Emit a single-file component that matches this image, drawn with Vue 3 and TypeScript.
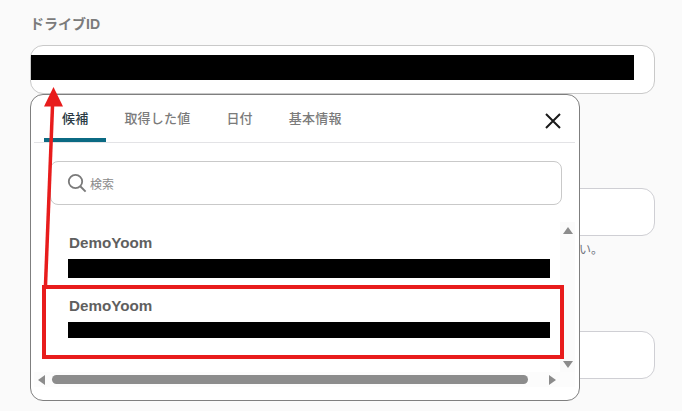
<script setup lang="ts">
const tabs = ['候補', '取得した値', '日付', '基本情報']
const rows = [
  { name: 'DemoYoom', h: 19 },
  { name: 'DemoYoom', h: 16 }
]
</script>

<template>
  <div class="page">
    <div class="label">ドライブID</div>
    <div class="field first"><div class="mask"></div></div>
    <div class="field second"></div>
    <div class="hint">い。</div>
    <div class="field third"></div>

    <div class="popup">
      <div class="tabs">
        <div v-for="(t, i) in tabs" :key="t" class="tab" :class="{ active: i === 0 }">{{ t }}</div>
        <svg class="close" width="18" height="18" viewBox="0 0 18 18">
          <path d="M2 2 16 16M16 2 2 16" stroke="#1a1a1a" stroke-width="2" fill="none" />
        </svg>
      </div>
      <div class="search">
        <svg width="20" height="20" viewBox="0 0 20 20">
          <circle cx="8.5" cy="8.5" r="6.7" stroke="#7a7a7a" stroke-width="1.8" fill="none" />
          <path d="M13.5 13.5 18.6 18.6" stroke="#7a7a7a" stroke-width="1.9" fill="none" />
        </svg>
        <span>検索</span>
      </div>
      <div class="list">
        <div v-for="(r, i) in rows" :key="i" class="row">
          <div class="name">{{ r.name }}</div>
          <div class="bar" :style="{ height: r.h + 'px' }"></div>
        </div>
      </div>
      <div class="vtrack">
        <i class="up"></i>
        <i class="down"></i>
      </div>
      <div class="htrack">
        <i class="left"></i>
        <div class="thumb"></div>
        <i class="right"></i>
      </div>
    </div>

    <div class="highlight"></div>
    <svg class="arrow" width="40" height="200" viewBox="0 0 40 200">
      <path d="M2.5 197 9.5 18" stroke="#e81c1c" stroke-width="3.5" fill="none" />
      <path d="M1 18.5 10.5 -1 20 18.5Z" fill="#e81c1c" />
    </svg>
  </div>
</template>

<style scoped>
.page {
  position: relative;
  width: 682px;
  height: 411px;
  box-sizing: border-box;
  overflow: hidden;
  padding: 16px 27px 0 30px;
  background: #fafafa;
  font-family: "Liberation Sans", "Noto Sans CJK JP", sans-serif;
}
.label {
  height: 29px;
  line-height: 17px;
  font-size: 14px;
  font-weight: 700;
  color: #7b7b7b;
}
.field {
  box-sizing: border-box;
  background: #fff;
  border: 1px solid #cfcfd4;
  border-radius: 13px;
}
.first {
  height: 49px;
  padding-top: 9px;
  border-color: #c9c9c9;
}
.mask {
  width: 603px;
  height: 25px;
  background: #000;
}
.second {
  height: 48px;
  margin-top: 94px;
}
.hint {
  height: 32px;
  padding: 7px 0 0 549px;
  box-sizing: border-box;
  font-size: 12px;
  line-height: 14px;
  color: #6f7480;
}
.third {
  height: 48px;
  margin-top: 63px;
}
.popup {
  position: absolute;
  left: 30px;
  top: 94px;
  box-sizing: border-box;
  width: 550px;
  height: 307px;
  background: #fff;
  border: 1px solid #7f7f7f;
  border-radius: 13px;
  display: flex;
  flex-direction: column;
}
.tabs {
  position: relative;
  box-sizing: border-box;
  display: flex;
  height: 48px;
  margin: 0 4px 0 3px;
  padding-left: 10px;
  flex: none;
  border-bottom: 1px solid #e3e3e6;
}
.tab {
  box-sizing: border-box;
  height: 47px;
  padding: 15px 18px 0;
  font-size: 13px;
  line-height: 18px;
  font-weight: 500;
  letter-spacing: 0.2px;
  color: #7b7b7b;
  white-space: nowrap;
}
.tab.active {
  color: #2a3a44;
  border-bottom: 4px solid #0b6a83;
  border-radius: 3px 3px 0 0;
}
.close {
  position: absolute;
  right: 13px;
  top: 17px;
}
.search {
  flex: none;
  box-sizing: border-box;
  width: 512px;
  height: 44px;
  margin: 18px 0 0 19px;
  padding-left: 16px;
  border: 1px solid #c9c9c9;
  border-radius: 8px;
  display: flex;
  align-items: center;
  gap: 3px;
  font-size: 12px;
  color: #8a8a8a;
}
.list {
  flex: none;
  padding: 28px 0 0 37px;
}
.row {
  height: 63px;
  width: 482px;
}
.name {
  height: 26px;
  padding-left: 1px;
  font-size: 15.2px;
  line-height: 20px;
  font-weight: 700;
  color: #5f5f5f;
}
.bar {
  background: #000;
}
.vtrack {
  position: absolute;
  right: 4px;
  top: 127px;
  bottom: 28px;
  width: 15px;
  background: #fbfbfb;
}
.vtrack i,
.htrack i {
  position: absolute;
  width: 0;
  height: 0;
  border-style: solid;
  border-color: transparent;
}
.vtrack .up {
  left: 3px;
  top: 5px;
  border-width: 0 5px 7px;
  border-bottom-color: #8c8c8c;
}
.vtrack .down {
  left: 3px;
  bottom: 4px;
  border-width: 7px 5px 0;
  border-top-color: #8c8c8c;
}
.htrack {
  position: absolute;
  left: 3px;
  right: 4px;
  bottom: 13px;
  height: 15px;
  background: #fcfcfc;
}
.htrack .left {
  left: 4px;
  top: 3px;
  border-width: 5px 7px 5px 0;
  border-right-color: #8c8c8c;
}
.htrack .right {
  right: 19px;
  top: 3px;
  border-width: 5px 0 5px 7px;
  border-left-color: #8c8c8c;
}
.thumb {
  position: absolute;
  left: 18px;
  top: 3px;
  width: 476px;
  height: 9px;
  border-radius: 5px;
  background: #8c8c8c;
}
.highlight {
  position: absolute;
  left: 42px;
  top: 285px;
  box-sizing: border-box;
  width: 522px;
  height: 74px;
  border: 4px solid #e81c1c;
}
.arrow {
  position: absolute;
  left: 43px;
  top: 88px;
  overflow: visible;
}
</style>
